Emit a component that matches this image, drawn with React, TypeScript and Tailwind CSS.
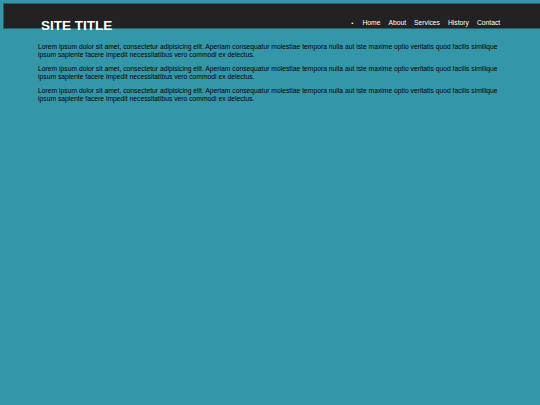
import React from 'react';

const navItems = ['Home', 'About', 'Services', 'History', 'Contact'];

const lorem =
  'Lorem ipsum dolor sit amet, consectetur adipisicing elit. Aperiam consequatur molestiae tempora nulla aut iste maxime optio veritatis quod facilis similique ipsum sapiente facere impedit necessitatibus vero commodi ex delectus.';

export default function App() {
  return (
    <div
      className="w-[540px] h-[405px] overflow-hidden bg-[#3497a9]"
      style={{ fontFamily: '"Liberation Sans", Arial, sans-serif' }}
    >
      <header className="ml-[3px] mt-[3px] h-[26px] w-[560px] bg-[#222222] border border-[#2a5f6a] flex items-start">
        <h1 className="ml-[37px] pt-[15px] text-[13.5px] leading-[14px] font-bold text-white whitespace-nowrap">
          SITE TITLE
        </h1>
        <nav className="ml-[239px] pt-[15px] flex items-center text-[6.75px] leading-[8px] text-white">
          <span className="mr-[9px] text-[6px]">•</span>
          <ul className="flex gap-[8px]">
            {navItems.map(item => (
              <li key={item}>{item}</li>
            ))}
          </ul>
        </nav>
      </header>
      <main className="ml-[38px] mt-[14px] w-[466px] flex flex-col gap-[6px] text-[6.75px] leading-[8px] text-black">
        <p>{lorem}</p>
        <p>{lorem}</p>
        <p>{lorem}</p>
      </main>
    </div>
  );
}
